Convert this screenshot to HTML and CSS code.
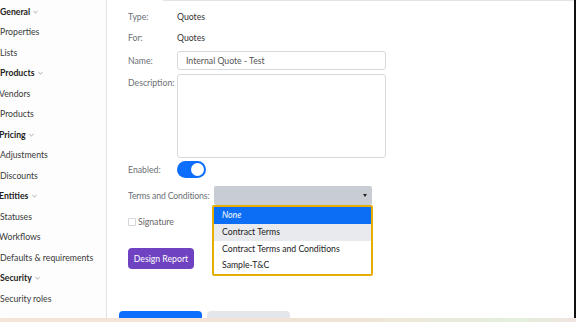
FILE: index.html
```html
<!DOCTYPE html>
<html lang="en">
<head>
    <meta charset="UTF-8">
    <title>Report Settings</title>
    <link rel="stylesheet" href="styles.css">
</head>
<body>
    <div class="screen">
        <aside class="sidebar">
            <div class="nav-head">General <svg class="chev" viewBox="0 0 6 4"><polyline points="0.5,0.5 3,3.5 5.5,0.5"/></svg></div>
            <div class="nav-item">Properties</div>
            <div class="nav-item">Lists</div>
            <div class="nav-head">Products <svg class="chev" viewBox="0 0 6 4"><polyline points="0.5,0.5 3,3.5 5.5,0.5"/></svg></div>
            <div class="nav-item cut">Vendors</div>
            <div class="nav-item">Products</div>
            <div class="nav-head cut">Pricing <svg class="chev" viewBox="0 0 6 4"><polyline points="0.5,0.5 3,3.5 5.5,0.5"/></svg></div>
            <div class="nav-item">Adjustments</div>
            <div class="nav-item">Discounts</div>
            <div class="nav-head cut">Entities <svg class="chev" viewBox="0 0 6 4"><polyline points="0.5,0.5 3,3.5 5.5,0.5"/></svg></div>
            <div class="nav-item">Statuses</div>
            <div class="nav-item cut">Workflows</div>
            <div class="nav-item">Defaults &amp; requirements</div>
            <div class="nav-head">Security <svg class="chev" viewBox="0 0 6 4"><polyline points="0.5,0.5 3,3.5 5.5,0.5"/></svg></div>
            <div class="nav-item">Security roles</div>
        </aside>

        <main class="main">
            <div class="top-rule"></div>

            <div class="form">
                <div class="row row-type">
                    <span class="label">Type:</span>
                    <span class="value">Quotes</span>
                </div>
                <div class="row row-for">
                    <span class="label">For:</span>
                    <span class="value">Quotes</span>
                </div>
                <div class="row row-name">
                    <span class="label">Name:</span>
                    <div class="input">Internal Quote - Test</div>
                </div>
                <div class="row row-desc">
                    <span class="label">Description:</span>
                    <div class="textarea"></div>
                </div>
                <div class="row row-enabled">
                    <span class="label">Enabled:</span>
                    <div class="toggle"><span class="knob"></span></div>
                </div>
                <div class="row row-terms">
                    <span class="label label-wide">Terms and Conditions:</span>
                    <div class="select">
                        <span class="caret"></span>
                        <ul class="dropdown">
                            <li class="opt selected">None</li>
                            <li class="opt hover">Contract Terms</li>
                            <li class="opt">Contract Terms and Conditions</li>
                            <li class="opt">Sample-T&amp;C</li>
                        </ul>
                    </div>
                </div>
                <div class="row row-sig">
                    <span class="checkbox"></span>
                    <span class="label">Signature</span>
                </div>
                <div class="row-btn">
                    <button class="btn-design">Design Report</button>
                </div>
            </div>

            <div class="rule"></div>
            <div class="rule rule-dark"></div>

            <div class="actions">
                <span class="btn-save"></span>
                <span class="btn-cancel"></span>
            </div>
        </main>

        <div class="edge"></div>
    </div>
    <div class="taskbar"></div>
</body>
</html>
```

FILE: styles.css
```css
* {
    box-sizing: border-box;
    margin: 0;
    padding: 0;
}

body {
    font-family: 'Lato', 'Open Sans', sans-serif;
    font-size: 8.7px;
    color: #333;
    background: white;
    width: 576px;
    height: 322px;
    overflow: hidden;
}

.screen {
    display: flex;
    height: 318px;
    overflow: hidden;
}

/* left navigation */
.sidebar {
    width: 107px;
    flex-shrink: 0;
    background-color: #fdfdfd;
    border-right: 1px solid #dfe2e6;
    padding-top: 1.5px;
    overflow: hidden;
}

.nav-head,
.nav-item {
    height: 20.5px;
    line-height: 20.5px;
    white-space: nowrap;
    color: #3a3a3a;
}

.nav-head {
    font-weight: 700;
    color: #222;
}

.cut {
    margin-left: -1px;
}

.chev {
    width: 5px;
    height: 4px;
    margin-left: 1px;
    vertical-align: 1px;
}

.chev polyline {
    fill: none;
    stroke: #999;
    stroke-width: 0.9;
}

/* main panel */
.main {
    flex: 1;
    display: flex;
    flex-direction: column;
}

.top-rule {
    height: 2px;
    margin-left: 56px;
    border-top: 1px solid #e3e4e6;
}

.form {
    padding-left: 21px;
}

.row {
    display: flex;
    align-items: center;
}

.label {
    width: 49px;
    flex-shrink: 0;
    color: #6b6f74;
}

.label-wide {
    width: 86px;
    letter-spacing: -0.15px;
}

.value {
    color: #333;
}

.row-type {
    height: 21px;
    margin-top: 5px;
}

.row-for {
    height: 21px;
}

.row-name {
    margin-top: 3px;
}

.input {
    width: 209px;
    height: 19px;
    line-height: 17px;
    padding-left: 8px;
    border: 1px solid #d6d9dd;
    border-radius: 3px;
    color: #555;
}

.row-desc {
    margin-top: 4px;
    align-items: flex-start;
}

.row-desc .label {
    padding-top: 3px;
}

.textarea {
    width: 209px;
    height: 84px;
    border: 1px solid #d6d9dd;
    border-radius: 3px;
}

.row-enabled {
    margin-top: 3px;
}

.toggle {
    width: 29px;
    height: 17px;
    border-radius: 9px;
    background-color: #0d6efd;
    display: flex;
    justify-content: flex-end;
    align-items: center;
    padding-right: 2px;
}

.knob {
    width: 13px;
    height: 13px;
    border-radius: 50%;
    background-color: white;
}

.row-terms {
    margin-top: 8px;
}

.select {
    position: relative;
    width: 158px;
    height: 19px;
    background-color: #c8ccd3;
    border-radius: 2px;
    display: flex;
    justify-content: flex-end;
    align-items: center;
    padding-right: 5px;
}

.caret {
    width: 0;
    height: 0;
    border-left: 2.5px solid transparent;
    border-right: 2.5px solid transparent;
    border-top: 3px solid #222;
}

.dropdown {
    position: absolute;
    top: 100%;
    left: -2px;
    width: 161px;
    list-style: none;
    background: white;
    border: 2px solid #e6ae05;
    border-radius: 2px;
    z-index: 2;
}

.opt {
    height: 16.75px;
    line-height: 16.75px;
    padding-left: 8px;
    color: #222;
    white-space: nowrap;
}

.opt.selected {
    background-color: #0b6ef5;
    color: white;
    font-style: italic;
}

.opt.hover {
    background-color: #e8eaed;
}

.row-sig {
    margin-top: 8px;
    height: 17px;
}

.checkbox {
    width: 8px;
    height: 8px;
    border: 1px solid #d3d6da;
    border-radius: 1px;
    margin-right: 2px;
}

.row-sig .label {
    width: auto;
    color: #666;
}

.row-btn {
    margin-top: 18px;
}

.btn-design {
    width: 66px;
    height: 21px;
    border: none;
    border-radius: 4px;
    background-color: #6f42c1;
    color: white;
    font-family: inherit;
    font-size: 8.7px;
}

.rule {
    height: 1px;
    margin-left: 11px;
    margin-top: 14px;
    background-color: #e2e4e7;
}

.rule-dark {
    margin-top: 16px;
    height: 1.5px;
    background-color: #6f8d93;
}

.actions {
    display: flex;
    gap: 5px;
    margin-left: 12px;
    margin-top: 12px;
}

.btn-save,
.btn-cancel {
    width: 83px;
    height: 12px;
    border-radius: 4px;
}

.btn-save {
    background-color: #0d6efd;
}

.btn-cancel {
    background-color: #e3e6ea;
}

.edge {
    width: 2px;
    background-color: #111;
}

.taskbar {
    height: 4px;
    background: linear-gradient(90deg, #f4e4d8 0%, #f1e3d5 60%, #e3efdc 90%, #f1e4e0 100%);
}
```
